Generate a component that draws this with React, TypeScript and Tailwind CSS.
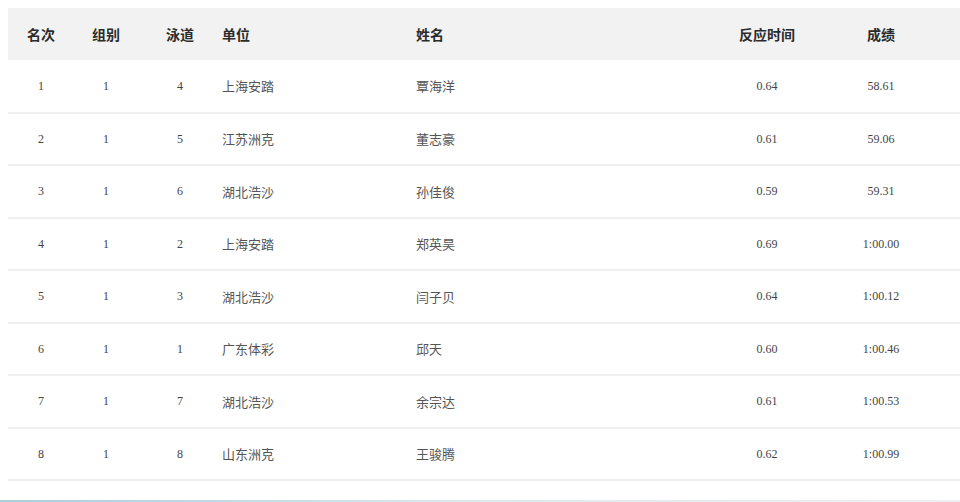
const rows = [
  ["1", "1", "4", "上海安踏", "覃海洋", "0.64", "58.61"],
  ["2", "1", "5", "江苏洲克", "董志豪", "0.61", "59.06"],
  ["3", "1", "6", "湖北浩沙", "孙佳俊", "0.59", "59.31"],
  ["4", "1", "2", "上海安踏", "郑英昊", "0.69", "1:00.00"],
  ["5", "1", "3", "湖北浩沙", "闫子贝", "0.64", "1:00.12"],
  ["6", "1", "1", "广东体彩", "邱天", "0.60", "1:00.46"],
  ["7", "1", "7", "湖北浩沙", "余宗达", "0.61", "1:00.53"],
  ["8", "1", "8", "山东洲克", "王骏腾", "0.62", "1:00.99"],
];

const cjk = "font-['Noto_Sans_CJK_SC','Noto_Sans',sans-serif]";
const num = "font-['Liberation_Serif',serif]";

export default function App() {
  return (
    <div className="h-[502px] w-[960px] overflow-hidden bg-white">
      <div className="pl-2 pt-2">
        <table className="w-[952px] table-fixed border-collapse">
          <colgroup>
            <col className="w-[66px]" />
            <col className="w-[64px]" />
            <col className="w-[84px]" />
            <col className="w-[194px]" />
            <col className="w-[294px]" />
            <col className="w-[114px]" />
            <col className="w-[114px]" />
            <col />
          </colgroup>
          <thead>
            <tr className={`h-[52px] bg-[#f2f2f2] text-[14px] font-bold text-[#2b2b2b] ${cjk}`}>
              <th className="text-center font-bold">名次</th>
              <th className="text-center font-bold">组别</th>
              <th className="text-center font-bold">泳道</th>
              <th className="text-left font-bold">单位</th>
              <th className="text-left font-bold">姓名</th>
              <th className="text-center font-bold">反应时间</th>
              <th className="text-center font-bold">成绩</th>
              <th />
            </tr>
          </thead>
          <tbody>
            {rows.map((r) => (
              <tr key={r[0]} className="h-[52.5px] border-b-2 border-[#efefef]">
                <td className={`text-center text-[12px] text-[#444] ${num}`}>{r[0]}</td>
                <td className={`text-center text-[12px] text-[#444] ${num}`}>{r[1]}</td>
                <td className={`text-center text-[12px] text-[#444] ${num}`}>{r[2]}</td>
                <td className={`text-left text-[13px] text-[#555] ${cjk}`}>{r[3]}</td>
                <td className={`text-left text-[13px] text-[#555] ${cjk}`}>{r[4]}</td>
                <td className={`text-center text-[12px] text-[#444] ${num}`}>{r[5]}</td>
                <td className={`text-center text-[12px] text-[#444] ${num}`}>{r[6]}</td>
                <td />
              </tr>
            ))}
          </tbody>
        </table>
      </div>
      <div className="mt-[19px] h-[3px] bg-gradient-to-r from-[#a9cfdc] via-[#dce9ee] to-[#eef0f3]" />
    </div>
  );
}
